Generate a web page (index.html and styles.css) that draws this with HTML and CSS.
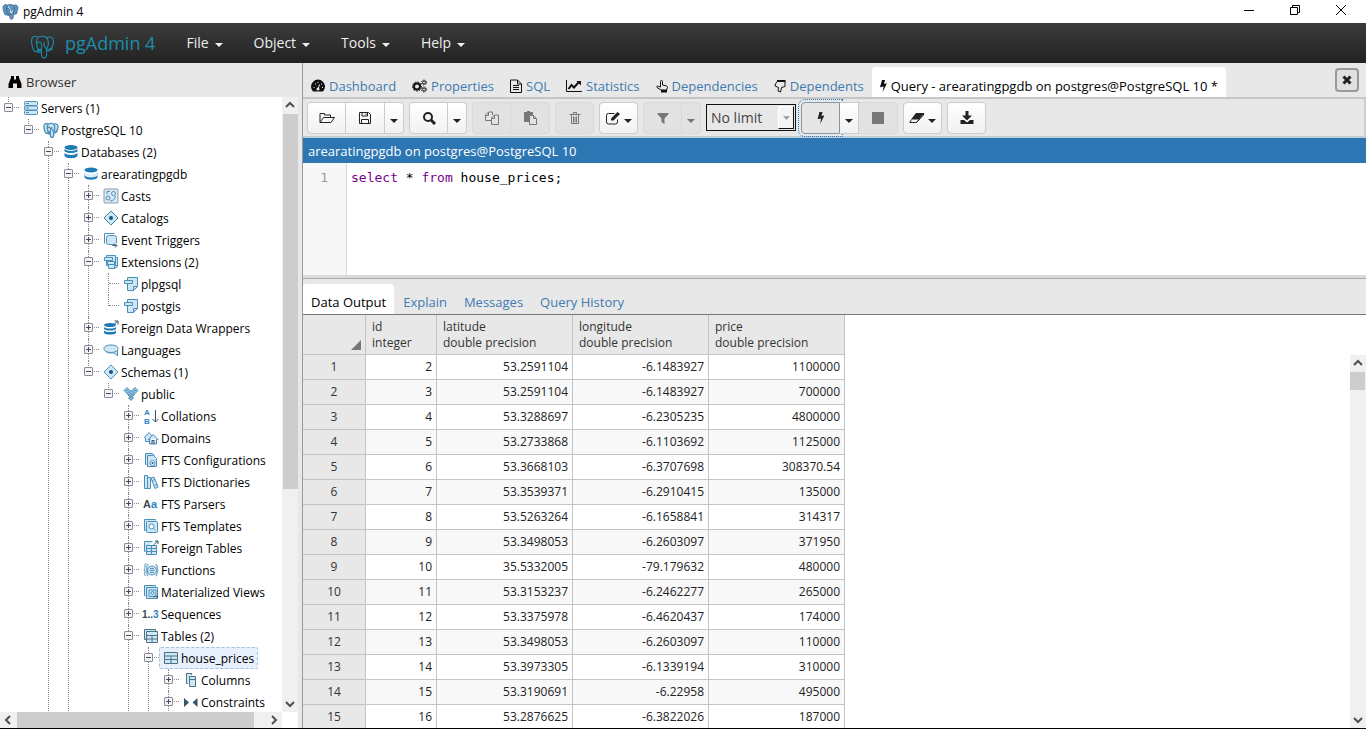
FILE: index.html
```html
<!DOCTYPE html>
<html lang="en">

<head>
    <meta charset="UTF-8">
    <meta name="viewport" content="width=device-width, initial-scale=1.0">
    <title>pgAdmin 4</title>

    <link rel="stylesheet" href="styles.css">
</head>

<body>
    <svg class="sprite" aria-hidden="true">
        <symbol id="elephant" viewBox="0 0 24 24">
            <path d="M8 3C4 1 1 3 1.500 8c.5 4 2 8 3.500 9 1.500.5 2.500-1 3-2.500M8 3c3-1.500 7-1 8 .5 3-1.500 6-.5 6.500 2.500.5 4-2 8-4 10-.8.5-2 0-2.500-1M8 3c-1.500 2-2 5-1.500 7.500.2 2 .5 3 1.500 4 1 .8 2.500.3 3-.5M16 3.500c1.500 2 2 4 1.500 7-.3 2-1.500 3-1.500 4.500M11 14v6c0 1.500 1 3 2.500 3s2.500-1.500 2.500-4v-4c1.500.8 4 .5 5.500-.8-1 .3-2.500.3-3.500 0M11 14c.5-2 .5-5-1-6-1-.5-2.500 0-3.300.7M14 8c-.8.8-.8 2.500 0 4s1.500 2 2 3M11 15.500c-1.500.3-3 .2-4 1.500 1.500.8 3 .7 4 .3" />
        </symbol>
        <symbol id="caret" viewBox="0 0 8 4"><path d="M0 0h8L4 4z" /></symbol>
        <symbol id="up" viewBox="0 0 16 16"><path d="M4 10l4-4 4 4" /></symbol>
        <symbol id="down" viewBox="0 0 16 16"><path d="M4 6l4 4 4-4" /></symbol>
        <symbol id="left" viewBox="0 0 16 16"><path d="M10 4L6 8l4 4" /></symbol>
        <symbol id="right" viewBox="0 0 16 16"><path d="M6 4l4 4-4 4" /></symbol>
        <symbol id="bolt" viewBox="0 0 7 14"><path d="M2 1h3L4 5l3-.8L2.600 13l1-5.500L0 8.300z" /></symbol>
        <symbol id="discs" viewBox="0 0 16 16">
            <ellipse cx="8" cy="3.500" rx="6.500" ry="2.500" />
            <path d="M1.500 5c2 2.500 11 2.500 13 0v2.500c-2 2.500-11 2.500-13 0zM1.500 9c2 2.500 11 2.500 13 0v3c-2 3-11 3-13 0z" />
        </symbol>
        <symbol id="diamond" viewBox="0 0 16 16">
            <path class="fill" d="M8 1L15 8 8 15 1 8z" />
            <circle class="dot" cx="8" cy="8" r="2" />
        </symbol>
        <symbol id="extension" viewBox="0 0 16 16">
            <path class="fill" d="M4.500 1.500h10v9l-4 4h-6zM10.500 14.500v-4h4" />
            <path class="fill" d="M1.500 4.500h8v3h-8z" />
        </symbol>
    </svg>

    <header class="titlebar">
        <svg class="app-icon" viewBox="0 0 24 24"><use href="#elephant" /></svg>
        <span>pgAdmin 4</span>
        <svg class="win-btn win-first" viewBox="0 0 12 12"><path d="M1 6.500h10" /></svg>
        <svg class="win-btn" viewBox="0 0 12 12"><path d="M1.500 3.500h7v7h-7zM3.500 3.500v-2h7v7h-2" /></svg>
        <svg class="win-btn" viewBox="0 0 12 12"><path d="M1 1l10 10M11 1L1 11" /></svg>
    </header>

    <nav class="navbar">
        <svg class="logo" viewBox="0 0 24 24"><use href="#elephant" /></svg>
        <a class="brand" href="#">pgAdmin 4</a>
        <a href="#">File <svg class="caret"><use href="#caret" /></svg></a>
        <a href="#">Object <svg class="caret"><use href="#caret" /></svg></a>
        <a href="#">Tools <svg class="caret"><use href="#caret" /></svg></a>
        <a href="#">Help <svg class="caret"><use href="#caret" /></svg></a>
    </nav>

    <main>
        <aside class="browser">
            <h2>
                <svg width="14" height="14" viewBox="0 0 14 14"><path d="M3 1h3v3.500h2V1h3v1.500L13.500 9v4H9V8.500H5V13H.5V9L3 2.500z" /></svg>
                Browser
            </h2>
            <div class="tree-area">
                <ul class="tree">
                    <li>
                        <div class="node"><i class="minus"></i><svg viewBox="0 0 16 16"><rect class="fill" x="1.500" y="1.500" width="13" height="4" rx="1" /><rect class="fill" x="1.500" y="6" width="13" height="4" rx="1" /><rect class="fill" x="1.500" y="10.500" width="13" height="4" rx="1" /><path d="M3 3.500h3M3 8h3M3 12.500h3" /></svg>Servers (1)</div>
                        <ul>
                            <li>
                                <div class="node"><i class="minus"></i><svg class="fill-all" viewBox="0 0 24 24"><use href="#elephant" /></svg>PostgreSQL 10</div>
                                <ul>
                                    <li class="more">
                                        <div class="node"><i class="minus"></i><svg class="discs" viewBox="0 0 16 16"><use href="#discs" /><path class="gap" d="M1.500 8c3 2 10 2 13 0" /></svg>Databases (2)</div>
                                        <ul>
                                            <li class="more">
                                                <div class="node"><i class="minus"></i><svg class="discs" viewBox="0 0 16 16"><ellipse cx="8" cy="4" rx="6.500" ry="2.500" /><path d="M1.500 7c2 2.500 11 2.500 13 0v4.500c-2 3-11 3-13 0z" /><path class="pale" d="M1.500 6.500v3c2 2.500 11 2.500 13 0v-3c-2 2.500-11 2.500-13 0z" /></svg>arearatingpgdb</div>
                                                <ul>
                                                    <li><div class="node"><i class="plus"></i><svg viewBox="0 0 16 16"><rect class="frame" x="1" y="1" width="14" height="14" rx="1" /><circle cx="10.500" cy="5.500" r="2" /><circle cx="5" cy="10" r="2" /><path d="M7 13c3 0 5-2 5.500-5M4 6V3.500h3" /></svg>Casts</div></li>
                                                    <li><div class="node"><i class="plus"></i><svg class="teal"><use href="#diamond" /></svg>Catalogs</div></li>
                                                    <li><div class="node"><i class="plus"></i><svg viewBox="0 0 16 16"><path d="M1.500 11.500v-10h10" /><path class="fill" d="M12 12.500H5.500a2 2 0 0 1-2-2v-5a2 2 0 0 1 2-2h6a2 2 0 0 1 2 2V11" /><path class="dark" d="M9.500 13.500h4M12 11.500l2 2-2 2" /></svg>Event Triggers</div></li>
                                                    <li>
                                                        <div class="node"><i class="minus"></i><svg viewBox="0 0 16 16"><path class="fill" d="M3.500 1.500h9v2h2v9l-3 2h-6v-3h-2zM11.500 14.500v-3h3M12.500 3.500v7h-2" /><path class="fill" d="M1.500 3.500h8v3h-8zM4.500 7.500h7v3h-7z" /></svg>Extensions (2)</div>
                                                        <ul>
                                                            <li><div class="node"><i class="leaf"></i><svg><use href="#extension" /></svg>plpgsql</div></li>
                                                            <li><div class="node"><i class="leaf"></i><svg><use href="#extension" /></svg>postgis</div></li>
                                                        </ul>
                                                    </li>
                                                    <li><div class="node"><i class="plus"></i><svg class="discs" viewBox="0 0 16 16"><ellipse cx="7" cy="5" rx="6" ry="2" /><path d="M1 7c2 2 10 2 12 0v2c-2 2-10 2-12 0zM1 10.500c2 2 10 2 12 0v2.500c-2 2-10 2-12 0z" /><path class="dark" d="M11 4.500L15 1M11.500 1H15v3.500" /></svg>Foreign Data Wrappers</div></li>
                                                    <li><div class="node"><i class="plus"></i><svg viewBox="0 0 16 16"><path class="fill" d="M8 3c4.500 0 7 1.500 7 3.500 0 1-.3 1.500-.5 2V14L12 11.500c-2-1.500-6 .5-8-1.500C2 9.500 1 8 1 6.500 1 4.500 3.500 3 8 3zM4 10c3 .8 8 .5 10.500-1.500" /></svg>Languages</div></li>
                                                    <li>
                                                        <div class="node"><i class="minus"></i><svg><use href="#diamond" /></svg>Schemas (1)</div>
                                                        <ul>
                                                            <li>
                                                                <div class="node"><i class="minus"></i><svg viewBox="0 0 16 16"><path class="fill deep" d="M4 1.500l3 3-3 3-3-3zM12 1.500l3 3-3 3-3-3zM8 4.500l3 3-3 3-3-3zM8 9.500l2.500 2.500L8 14.500 5.500 12z" /><path class="dark" d="M3.500 4.500h1M11.500 4.500h1M7.500 7.500h1M7.500 12h1M4.500 8l2 2.500M11.500 8l-2 2.500" /></svg>public</div>
                                                                <ul>
                                                                    <li><div class="node"><i class="plus"></i><svg viewBox="0 0 16 16"><text class="blue" x="1" y="7" font-size="8">A</text><text class="blue" x="1" y="16" font-size="8">B</text><path class="dark" d="M12.500 2v12M9.500 11l3 3 3-3" /></svg>Collations</div></li>
                                                                    <li><div class="node"><i class="plus"></i><svg viewBox="0 0 16 16"><path class="fill" d="M2.500 8v3.500H7V8M1 8l5-5.500L11 8" /><path class="fill" d="M6.500 9v5h7V9M5 10l5-5.500 5.500 5.500" /><path class="dark" d="M9 14v-3.500h2V14" /></svg>Domains</div></li>
                                                                    <li><div class="node"><i class="plus"></i><svg viewBox="0 0 16 16"><path class="fill" d="M3.500 12.500h-1v-11h7l2 2" /><path class="fill" d="M4.500 3.500h6l3 3v8h-9z" /><circle class="white" cx="9.500" cy="11" r="2.500" /><circle class="dot" cx="9.500" cy="11" r="1" /></svg>FTS Configurations</div></li>
                                                                    <li><div class="node"><i class="plus"></i><svg viewBox="0 0 16 16"><path class="fill" d="M1.500 1.500h3v13h-3zM4.500 3.500h3v11h-3z" /><path class="fill" d="M8 4l3-1 4 10-3 1.500zM9.500 6.500l2.500-1M11.500 11.500l2.500-1" /></svg>FTS Dictionaries</div></li>
                                                                    <li><div class="node"><i class="plus"></i><svg viewBox="0 0 16 16"><text class="slate" x="0" y="12" font-size="11">A</text><text class="blue" x="8" y="12" font-size="11">a</text></svg>FTS Parsers</div></li>
                                                                    <li><div class="node"><i class="plus"></i><svg viewBox="0 0 16 16"><path class="fill" d="M2.500 12.500h-1v-11h11v1" /><rect class="fill" x="3.500" y="3.500" width="11" height="11" rx="1" /><circle class="white" cx="8.500" cy="8.500" r="2.500" /><path d="M10.500 10.500l2 2" /></svg>FTS Templates</div></li>
                                                                    <li><div class="node"><i class="plus"></i><svg viewBox="0 0 16 16"><path class="fill" d="M2.500 11.500h-1v-10h8" /><path class="fill" d="M3.500 5.500h10v9h-10zM3.500 8.500h10M3.500 11.500h10M8.500 5.500v9" /><path class="dark" d="M10.500 5L15 1M12 1h3v3" /></svg>Foreign Tables</div></li>
                                                                    <li><div class="node"><i class="plus"></i><svg viewBox="0 0 16 16"><path d="M3.500 1.500c-3 0-.5 5-2.500 6.500 2 1.500-.5 5 1.500 6" /><path class="fill" d="M5.500 2.500c-3 0-.8 4-2.500 6 1.700 1 0 5.500 2.500 5.500M12.500 2.500c3 0 .8 4 2.500 6-1.700 1 0 5.500-2.500 5.500" /><circle class="fill" cx="9" cy="8.500" r="4.500" /><path d="M7 6.500h4M6.500 8.500h5M7 10.500h4" /></svg>Functions</div></li>
                                                                    <li><div class="node"><i class="plus"></i><svg viewBox="0 0 16 16"><path class="fill" d="M2.500 11.500h-1v-10h11v1" /><path class="fill" d="M3.500 3.500h11v11h-11zM6 6h7v6.500H6z" /><circle cx="9.500" cy="9" r="1.500" /><path class="dark" d="M11 13.500l1.500-2 1.500 2 1-1.500" /></svg>Materialized Views</div></li>
                                                                    <li><div class="node"><i class="plus"></i><svg viewBox="0 0 16 16"><text class="slate" x="-1" y="12" font-size="10">1..</text><text class="blue" x="10" y="12" font-size="10">3</text></svg>Sequences</div></li>
                                                                    <li class="more">
                                                                        <div class="node"><i class="minus"></i><svg class="slate-line" viewBox="0 0 16 16"><path class="fill" d="M3 11.500H1.500v-10h11V3" /><path class="fill" d="M3.500 3.500h11v11h-11zM3.500 7.500h11M3.500 11h11M9 7.500v7" /></svg>Tables (2)</div>
                                                                        <ul>
                                                                            <li class="more">
                                                                                <div class="node"><i class="minus"></i><span><svg class="slate-line" viewBox="0 0 16 16"><path class="fill" d="M1.500 2.500h13v11h-13zM1.500 6h13M1.500 9.500h13M8 6v7.500" /></svg>house_prices</span></div>
                                                                                <ul>
                                                                                    <li><div class="node"><i class="plus"></i><svg class="slate-line" viewBox="0 0 16 16"><path class="fill" d="M5 11.500H3.500v-10h5V3" /><path class="fill" d="M6.500 4.500h6v10h-6zM6.500 7.500h6" /></svg>Columns</div></li>
                                                                                    <li class="more"><div class="node"><i class="plus"></i><svg viewBox="0 0 16 16"><path class="solid" d="M1 4l5 4.500L1 13zM14.500 4L9.500 8.500l5 4.500z" /></svg>Constraints</div></li>
                                                                                </ul>
                                                                            </li>
                                                                        </ul>
                                                                    </li>
                                                                </ul>
                                                            </li>
                                                        </ul>
                                                    </li>
                                                </ul>
                                            </li>
                                        </ul>
                                    </li>
                                </ul>
                            </li>
                        </ul>
                    </li>
                </ul>
                <div class="scroll-y">
                    <svg><use href="#up" /></svg>
                    <div class="tree-thumb-y"></div>
                    <svg><use href="#down" /></svg>
                </div>
                <div class="scroll-x">
                    <svg><use href="#left" /></svg>
                    <div class="tree-thumb-x"></div>
                    <svg><use href="#right" /></svg>
                </div>
            </div>
        </aside>

        <section class="content">
            <div class="tabs top-tabs">
                <a href="#"><svg width="14" height="14" viewBox="0 0 14 14"><path d="M2 12.500a7 7 0 1 1 10 0z" /><path class="cut" d="M7 10.500L8.500 5.500M2.500 8.500h1M4 5h1M6.500 3.500h1M10 5h1M11 8.500h1" /><circle cx="7" cy="10" r="1.500" class="cut-fill" /></svg>Dashboard</a>
                <a href="#"><svg width="15" height="14" viewBox="0 0 15 14"><circle class="ring" cx="5" cy="7.500" r="3" /><circle class="teeth" cx="5" cy="7.500" r="4.500" /><circle class="ring thin" cx="12" cy="3.500" r="1.500" /><circle class="teeth small" cx="12" cy="3.500" r="2.500" /><circle class="ring thin" cx="12" cy="10.500" r="1.500" /><circle class="teeth small" cx="12" cy="10.500" r="2.500" /></svg>Properties</a>
                <a href="#"><svg width="12" height="14" viewBox="0 0 12 14"><path class="line" d="M.5 1h7L11.500 5v8.500H.5zM7.500 1v4h4M3 6.500h6M3 8.500h6M3 10.500h6" /></svg>SQL</a>
                <a href="#"><svg width="16" height="14" viewBox="0 0 16 14"><path class="line" d="M.5 1v11.500H16" /><path class="line bold" d="M2.500 10l3-4 2.500 2.500 4.500-5" /><path d="M10.500 2H15v4.500z" /></svg>Statistics</a>
                <a href="#"><svg width="12" height="14" viewBox="0 0 12 14"><path class="line" d="M4.500 8V2.500a1 1 0 0 1 2 0V6l4 1c.8.2 1 .8 1 1.500L10.500 11H5L1 8.500c-.8-1 .5-2 1.500-1.200z" /><path d="M5 11h6v2.500H5z" /></svg>Dependencies</a>
                <a href="#"><svg width="12" height="14" viewBox="0 0 12 14"><path class="line" d="M3 2.500h8v5L7.500 8.500 6.500 13 4 12l.5-3.500L1 7l.5-2z" /><path d="M3 1h8.500v2H3z" /></svg>Dependents</a>
                <a href="#" class="active"><svg width="7" height="14"><use href="#bolt" /></svg>Query - arearatingpgdb on postgres@PostgreSQL 10 *</a>
                <button class="close" type="button" aria-label="Close"><svg width="10" height="10" viewBox="0 0 10 10"><path d="M1.500 1.500l7 7M8.500 1.500l-7 7" /></svg></button>
            </div>

            <div class="toolbar">
                <div class="group">
                    <button type="button" aria-label="Open file"><svg viewBox="0 0 16 14"><path class="line" d="M1 11.500v-9h4.500V4h6v2.500M1 11.500l3.500-5h11L12 11.500z" /></svg></button>
                    <button type="button" aria-label="Save"><svg viewBox="0 0 16 14"><path class="line" d="M2.500 1.500h9l2 2v9h-11zM5 1.500V5h5.500V1.500M4.500 12.500V8.500h7v4M9 2.500v1.500" /></svg></button>
                    <button class="drop" type="button" aria-label="Save options"><svg class="caret"><use href="#caret" /></svg></button>
                </div>
                <div class="group">
                    <button type="button" aria-label="Find"><svg viewBox="0 0 16 14"><circle class="line bold" cx="7" cy="6" r="4" /><path class="line heavy" d="M10 9l4 4" /></svg></button>
                    <button class="drop" type="button" aria-label="Find options"><svg class="caret"><use href="#caret" /></svg></button>
                </div>
                <div class="group">
                    <button type="button" aria-label="Copy" disabled><svg viewBox="0 0 16 14"><path class="line" d="M7.500 9.500h-6V4l3-3h4v3M1.500 4.500h3V1M10.500 4h4v9.500h-7V7zM7.500 7.500h3V4" /></svg></button>
                    <button type="button" aria-label="Paste" disabled><svg viewBox="0 0 16 14"><path d="M2 1h3V0h3v1h3v3H7v7H2z" /><path class="line" d="M7.500 4.500h4l3 3v6h-7zM11.500 4.500v3h3" /></svg></button>
                </div>
                <div class="group">
                    <button type="button" aria-label="Delete row" disabled><svg viewBox="0 0 16 14"><path class="line" d="M4.500 4v8.500h7V4M2.500 3.500h11M6.500 3V1.500h3V3M6.500 5.500v6M8 5.500v6M9.500 5.500v6" /></svg></button>
                </div>
                <div class="group">
                    <button class="split" type="button" aria-label="Edit"><svg viewBox="0 0 16 14"><path class="line" d="M12.500 8.500v2.500a2 2 0 0 1-2 2h-7a2 2 0 0 1-2-2V4.500a2 2 0 0 1 2-2h6" /><path d="M6 7.500L12.500 1 15 3 8.500 9.500H6z" /></svg><svg class="caret"><use href="#caret" /></svg></button>
                </div>
                <div class="group">
                    <button type="button" aria-label="Filter" disabled><svg viewBox="0 0 16 14"><path d="M2.500 2h11v1L9.500 7.500V13l-3-2V7.500L2.500 3z" /></svg></button>
                    <button class="drop" type="button" aria-label="Filter options" disabled><svg class="caret"><use href="#caret" /></svg></button>
                </div>
                <div class="limit">
                    <select aria-label="Row limit">
                        <option>No limit</option>
                        <option>1000 rows</option>
                        <option>500 rows</option>
                        <option>100 rows</option>
                    </select>
                    <span><svg class="caret"><use href="#caret" /></svg></span>
                </div>
                <div class="group">
                    <button class="pressed" type="button" aria-label="Execute"><svg viewBox="0 0 7 14"><use href="#bolt" /></svg></button>
                    <button class="drop" type="button" aria-label="Execute options"><svg class="caret"><use href="#caret" /></svg></button>
                    <button type="button" aria-label="Stop" disabled><svg viewBox="0 0 16 14"><path d="M2 1h12v12H2z" /></svg></button>
                </div>
                <div class="group">
                    <button class="split" type="button" aria-label="Clear"><svg viewBox="0 0 16 14"><path d="M7 2h8.500L10 8.500H2z" /><path class="line" d="M2.500 8.500L.8 11.500h6.700l2.500-3M7.500 11.500L14.500 4V2.500" /></svg><svg class="caret"><use href="#caret" /></svg></button>
                </div>
                <div class="group">
                    <button type="button" aria-label="Download"><svg viewBox="0 0 16 14"><path d="M6.500 0h3v4.500H13L8 9.500 3 4.500h3.500z" /><path d="M1.500 9h3.500l3 2.500L11 9h3.500v4h-13z" /></svg></button>
                </div>
            </div>

            <div class="connection">arearatingpgdb on postgres@PostgreSQL 10</div>

            <div class="editor">
                <div class="gutter">1</div>
                <pre><b>select</b> * <b>from</b> house_prices;</pre>
            </div>

            <div class="tabs result-tabs">
                <a href="#" class="active">Data Output</a>
                <a href="#">Explain</a>
                <a href="#">Messages</a>
                <a href="#">Query History</a>
            </div>

            <div class="results">
                <div class="grid">
                    <table>
                        <thead>
                            <tr>
                                <th class="corner"><svg width="10" height="10" viewBox="0 0 10 10"><path d="M10 0v10H0z" /></svg></th>
                                <th class="id">id<br>integer</th>
                                <th>latitude<br>double precision</th>
                                <th>longitude<br>double precision</th>
                                <th>price<br>double precision</th>
                            </tr>
                        </thead>
                        <tbody>
                            <tr><th>1</th><td>2</td><td>53.2591104</td><td>-6.1483927</td><td>1100000</td></tr>
                            <tr><th>2</th><td>3</td><td>53.2591104</td><td>-6.1483927</td><td>700000</td></tr>
                            <tr><th>3</th><td>4</td><td>53.3288697</td><td>-6.2305235</td><td>4800000</td></tr>
                            <tr><th>4</th><td>5</td><td>53.2733868</td><td>-6.1103692</td><td>1125000</td></tr>
                            <tr><th>5</th><td>6</td><td>53.3668103</td><td>-6.3707698</td><td>308370.54</td></tr>
                            <tr><th>6</th><td>7</td><td>53.3539371</td><td>-6.2910415</td><td>135000</td></tr>
                            <tr><th>7</th><td>8</td><td>53.5263264</td><td>-6.1658841</td><td>314317</td></tr>
                            <tr><th>8</th><td>9</td><td>53.3498053</td><td>-6.2603097</td><td>371950</td></tr>
                            <tr><th>9</th><td>10</td><td>35.5332005</td><td>-79.179632</td><td>480000</td></tr>
                            <tr><th>10</th><td>11</td><td>53.3153237</td><td>-6.2462277</td><td>265000</td></tr>
                            <tr><th>11</th><td>12</td><td>53.3375978</td><td>-6.4620437</td><td>174000</td></tr>
                            <tr><th>12</th><td>13</td><td>53.3498053</td><td>-6.2603097</td><td>110000</td></tr>
                            <tr><th>13</th><td>14</td><td>53.3973305</td><td>-6.1339194</td><td>310000</td></tr>
                            <tr><th>14</th><td>15</td><td>53.3190691</td><td>-6.22958</td><td>495000</td></tr>
                            <tr><th>15</th><td>16</td><td>53.2876625</td><td>-6.3822026</td><td>187000</td></tr>
                        </tbody>
                    </table>
                </div>
                <div class="scroll-y">
                    <svg><use href="#up" /></svg>
                    <div class="grid-thumb"></div>
                    <svg><use href="#down" /></svg>
                </div>
            </div>
        </section>
    </main>
</body>

</html>
```
FILE: styles.css
```css
* {
    box-sizing: border-box;
}

body {
    display: flex;
    flex-direction: column;
    height: 100vh;
    margin: 0;
    overflow: hidden;
    font-family: "Open Sans", sans-serif;
    font-size: 13px;
    color: #222;
    background: #fff;
    border-bottom: 1px solid #000;
}

a {
    text-decoration: none;
}

ul {
    list-style: none;
    margin: 0;
    padding: 0;
}

svg {
    flex: none;
}

.sprite {
    position: absolute;
    width: 0;
    height: 0;
}

.caret {
    width: 8px;
    height: 4px;
    fill: currentColor;
}

/* window title and menu */

.titlebar {
    display: flex;
    align-items: center;
    height: 23px;
    padding: 0 19px 0 2px;
    font-size: 12px;
    color: #000;
}

.app-icon {
    width: 17px;
    height: 17px;
    margin-right: 4px;
    fill: #5f93c0;
    stroke: #2f5f8c;
    stroke-width: 1;
}

.win-btn {
    width: 12px;
    height: 12px;
    margin: 0 0 3px 34px;
    fill: none;
    stroke: #000;
}

.win-first {
    margin-left: auto;
}

.navbar {
    display: flex;
    align-items: center;
    height: 40px;
    padding-left: 30px;
    background: linear-gradient(#3c3c3c, #222);
}

.navbar a {
    display: flex;
    align-items: center;
    gap: 6px;
    height: 38px;
    margin: 0 31px 2px 0;
    font-size: 14px;
    color: #eee;
}

.navbar a .caret {
    margin-top: 5px;
}

.navbar .brand {
    margin: 0 31px 0 0;
    font-size: 18px;
    color: #1c8cab;
}

.logo {
    width: 25px;
    height: 25px;
    margin: 7px 10px 0 0;
    fill: none;
    stroke: #1c8cab;
}

main {
    display: flex;
    flex: 1;
    min-height: 0;
}

/* object browser */

.browser {
    display: flex;
    flex-direction: column;
    width: 303px;
    padding-right: 4px;
    background: #e8e8e8;
    border-right: 1px solid #999;
}

.browser h2 {
    display: flex;
    align-items: center;
    gap: 4px;
    height: 34px;
    margin: 0;
    padding: 4px 0 0 8px;
    font-size: 13px;
    font-weight: 400;
    color: #333;
}

.tree-area {
    display: grid;
    grid-template-columns: 1fr 16px;
    grid-template-rows: 1fr 16px;
    flex: 1;
    min-height: 0;
    background: #fff;
}

.tree {
    min-width: 0;
    min-height: 0;
    overflow: hidden;
    font-size: 12px;
    color: #000;
    white-space: nowrap;
}

.tree ul {
    padding-left: 20px;
}

.tree li {
    position: relative;
}

/* dotted guide that runs down beside the siblings */
.tree li::before {
    content: "";
    position: absolute;
    top: 0;
    bottom: 0;
    left: 8px;
    border-left: 1px dotted #888;
}

.tree li:last-child:not(.more)::before {
    bottom: auto;
    height: 11px;
}

.node {
    position: relative;
    display: flex;
    align-items: center;
    height: 22px;
}

.node::before {
    content: "";
    position: absolute;
    top: 10px;
    left: 9px;
    width: 10px;
    border-top: 1px dotted #888;
}

.node i {
    position: relative;
    width: 9px;
    height: 9px;
    margin: 0 10px 2px 4px;
    background: #f4f4f4;
    border: 1px solid #8a8a98;
    border-radius: 1px;
}

.node i::before,
.plus::after {
    content: "";
    position: absolute;
    top: 3px;
    left: 1px;
    width: 5px;
    height: 1px;
    background: #444a66;
}

.node .plus::after {
    top: 1px;
    left: 3px;
    width: 1px;
    height: 5px;
}

.node .leaf {
    visibility: hidden;
}

.node svg {
    width: 16px;
    height: 16px;
    margin-right: 2px;
    overflow: visible;
    fill: none;
    stroke: #4a8fba;
}

.node span {
    display: flex;
    align-items: center;
    height: 22px;
    margin-left: -4px;
    padding: 0 3px;
    background: #e7f0fc;
    border: 1px dashed #a3c3dc;
    border-radius: 2px;
}

/* tree icon parts, some of them inside shared symbols */

.fill {
    fill: #cfe6f5;
}

.fill.deep {
    fill: #8cc3e8;
}

.dot {
    fill: #1f4f7a;
    stroke: none;
}

.node .fill-all {
    fill: #cfe4f1;
    stroke-width: 2;
}

.node .frame {
    fill: #d9eaf5;
    stroke: #8b9aa6;
}

.node .white {
    fill: #fff;
}

.node .dark {
    stroke: #34566b;
    fill: none;
}

.node .solid {
    fill: #34566b;
    stroke: none;
}

.node .teal {
    stroke: #3d8a9e;
}

.node .slate-line {
    stroke: #4b7388;
}

.node .discs {
    fill: #1f7bb5;
    stroke: none;
}

.node .discs .gap {
    fill: none;
    stroke: #fff;
}

.node .discs .pale {
    fill: #e4f0f8;
}

.node text {
    font-family: "Liberation Sans", sans-serif;
    font-weight: 700;
    stroke: none;
}

.node .blue {
    fill: #2c83bd;
}

.node .slate {
    fill: #3c4c58;
}

/* scrollbars */

.scroll-x,
.scroll-y {
    display: flex;
    justify-content: space-between;
    background: #f0f0f0;
}

.scroll-y {
    flex-direction: column;
}

.scroll-x svg,
.scroll-y svg {
    width: 16px;
    height: 16px;
    fill: none;
    stroke: #505050;
    stroke-width: 2;
}

.tree-thumb-y {
    flex: 0 1 61%;
    margin: 1px 0 auto 1px;
    background: #cdcdcd;
}

.tree-thumb-x {
    flex: 0 1 84%;
    margin: 0 auto 0 1px;
    background: #cdcdcd;
}

.grid-thumb {
    height: 18px;
    margin: 1px 1px auto 0;
    background: #cdcdcd;
}

/* tabs */

.content {
    display: flex;
    flex-direction: column;
    flex: 1;
    min-width: 0;
}

.tabs {
    display: flex;
    align-items: flex-end;
    background: #e8e8e8;
}

.tabs a {
    display: flex;
    align-items: center;
    gap: 4px;
    height: 30px;
    padding: 8px 8px 0;
    color: #3f7ab0;
    white-space: nowrap;
}

.tabs .active {
    color: #000;
    background: #fff;
    border-radius: 4px 4px 0 0;
}

.tabs svg {
    fill: #111;
}

.line {
    fill: none;
    stroke: currentColor;
}

.tabs .line {
    fill: none;
    stroke: #111;
}

.line.bold {
    stroke-width: 2;
}

.line.heavy {
    stroke-width: 3;
}

.cut {
    stroke: #e8e8e8;
}

.cut-fill {
    fill: #e8e8e8;
}

.ring {
    fill: none;
    stroke: #111;
    stroke-width: 2;
}

.ring.thin {
    stroke-width: 1;
}

.teeth {
    fill: none;
    stroke: #111;
    stroke-dasharray: 2 1;
}

.teeth.small {
    stroke-dasharray: 1 1;
}

.top-tabs {
    height: 36px;
    border-bottom: 2px solid #c6c6c6;
}

.close {
    display: flex;
    align-items: center;
    justify-content: center;
    width: 24px;
    height: 24px;
    margin: 0 7px 5px auto;
    padding: 0;
    background: #e0e0e0;
    border: 2px solid #999;
    border-radius: 4px;
}

.close path {
    stroke: #222;
    stroke-width: 3;
}

.result-tabs {
    gap: 1px;
    height: 37px;
    border-top: 1px solid #aaa;
    border-bottom: 1px solid #777;
    box-shadow: 0 -3px #dadada;
}

.result-tabs a {
    padding-top: 6px;
}

/* query toolbar */

.toolbar {
    display: flex;
    align-items: center;
    gap: 5px;
    height: 39px;
    padding: 0 4px;
    background: #e8e8e8;
    border-right: 2px solid #ccc;
    border-bottom: 2px solid #c2cdd6;
}

.group {
    display: flex;
}

.toolbar button {
    display: flex;
    align-items: center;
    justify-content: center;
    width: 39px;
    height: 32px;
    padding: 0;
    color: #222;
    background: linear-gradient(#fff, #f1f1f1);
    border: 1px solid #ccc;
    border-left-width: 0;
}

.toolbar button:first-child {
    border-left-width: 1px;
    border-radius: 4px 0 0 4px;
}

.toolbar button:last-child {
    border-radius: 0 4px 4px 0;
}

.toolbar button:only-child {
    border-radius: 4px;
}

.toolbar button svg {
    width: 16px;
    height: 14px;
    fill: currentColor;
}

.toolbar button .caret {
    width: 8px;
    height: 4px;
    margin-top: 6px;
}

.toolbar .drop {
    width: 19px;
}

.toolbar .split {
    gap: 3px;
}

.toolbar button:disabled {
    color: #777;
    background: #e2e2e2;
    border-color: #d8d8d8;
}

.toolbar .pressed {
    background: #e6e6e6;
    border-color: #8297a8;
    outline: 1px dotted #2c76b4;
    outline-offset: 2px;
}

.limit {
    position: relative;
}

.limit select {
    display: block;
    width: 90px;
    height: 27px;
    padding: 0 4px;
    font: 14px "Open Sans", sans-serif;
    color: #444;
    background: #e8e8e8;
    border: 1px solid #111;
    border-radius: 0;
    appearance: none;
}

.limit span {
    position: absolute;
    top: 2px;
    right: 2px;
    display: grid;
    place-items: center;
    width: 16px;
    height: 23px;
    color: #999;
    background: #f4f4f4;
    border: 1px solid #fff;
    border-right-color: #111;
    border-bottom-color: #111;
    pointer-events: none;
}

.limit .caret {
    width: 7px;
}

/* query editor */

.connection {
    height: 25px;
    padding-left: 5px;
    line-height: 26px;
    color: #fff;
    background: #2c76b4;
}

.editor {
    display: flex;
    height: 115px;
    font-family: "DejaVu Sans Mono", monospace;
    line-height: 20px;
    color: #000;
}

.gutter {
    width: 44px;
    padding: 5px 18px 0 0;
    color: #999;
    text-align: right;
    background: #f7f7f7;
    border-right: 1px solid #ddd;
}

.editor pre {
    margin: 0;
    padding: 5px 4px;
    font: inherit;
}

.editor b {
    font-weight: 400;
    color: #770088;
}

/* data output */

.results {
    display: flex;
    flex: 1;
    min-height: 0;
}

.results .scroll-y {
    margin-top: 40px;
}

.grid {
    flex: 1;
    overflow: hidden;
}

table {
    table-layout: fixed;
    width: 542px;
    border-collapse: separate;
    border-spacing: 0;
    font-size: 12px;
    line-height: 16px;
}

th,
td {
    height: 25px;
    padding: 0 4px;
    border-right: 1px solid #c4c4c4;
    border-bottom: 1px solid #c4c4c4;
}

th {
    font-weight: 400;
    color: #333;
    background: #e8e8e8;
}

td {
    text-align: right;
}

thead th {
    width: 136px;
    height: 40px;
    padding: 0 6px;
    text-align: left;
}

thead .corner {
    width: 63px;
    padding: 0 4px 4px;
    text-align: right;
    vertical-align: bottom;
}

thead .id {
    width: 71px;
}

.corner svg {
    display: block;
    margin-left: auto;
    fill: #777;
}

tbody tr:nth-child(even) td {
    background: #f8f8f8;
}
```
